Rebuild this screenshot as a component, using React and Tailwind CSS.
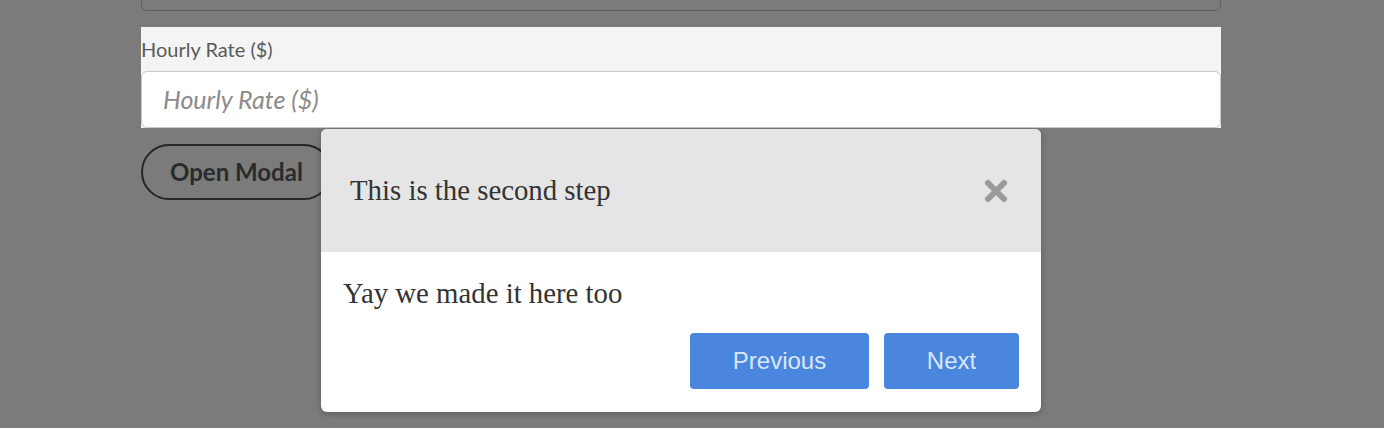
import { X } from 'lucide-react'

export default function App() {
  return (
    <div className="relative w-[1384px] h-[428px] overflow-hidden bg-[#7b7b7b] font-['Lato',sans-serif]">
      <div className="ml-[141px] w-[1080px] flex flex-col">
        {/* dimmed field above */}
        <div className="-mt-[46px] h-[57px] rounded-md border border-[#5f5f5f]" />

        {/* highlighted step target */}
        <div className="mt-[16px] bg-[#f4f4f4] flex flex-col">
          <label className="h-[44px] flex items-center text-[20px] text-[#5a5a5a] leading-none">Hourly Rate ($)</label>
          <div className="h-[57px] rounded-md border border-[#c9c9c9] bg-white flex items-center px-[21px]">
            <span className="text-[25px] italic text-[#8b8b8b]">Hourly Rate ($)</span>
          </div>
        </div>

        <div className="mt-[16px] flex">
          <button className="h-[56px] px-[27px] rounded-full border-[2.5px] border-[#262626] text-[24px] font-bold text-[#2b2b2b]">
            Open Modal
          </button>
        </div>
      </div>

      {/* tour modal */}
      <div className="absolute left-[321px] top-[129px] w-[720px] h-[283px] rounded-md bg-white overflow-hidden shadow-[0_2px_6px_rgba(0,0,0,0.25)] flex flex-col font-['Liberation_Serif',serif]">
        <div className="h-[123px] bg-[#e5e5e5] flex items-center justify-between pl-[29px] pr-[29px]">
          <h2 className="text-[28.8px] text-[#333]">This is the second step</h2>
          <X size={32} strokeWidth={4.5} className="text-[#9a9a9a]" />
        </div>
        <div className="flex-1 flex flex-col px-[22px] pb-[23px]">
          <p className="mt-[27px] text-[28.8px] text-[#333] leading-none">Yay we made it here too</p>
          <div className="mt-auto flex justify-end gap-[15px] font-['Liberation_Sans',sans-serif]">
            <button className="w-[179px] h-[56px] rounded-[4px] bg-[#4a86de] text-[24px] text-[#d9e6f8]">Previous</button>
            <button className="w-[135px] h-[56px] rounded-[4px] bg-[#4a86de] text-[24px] text-[#d9e6f8]">Next</button>
          </div>
        </div>
      </div>
    </div>
  )
}
